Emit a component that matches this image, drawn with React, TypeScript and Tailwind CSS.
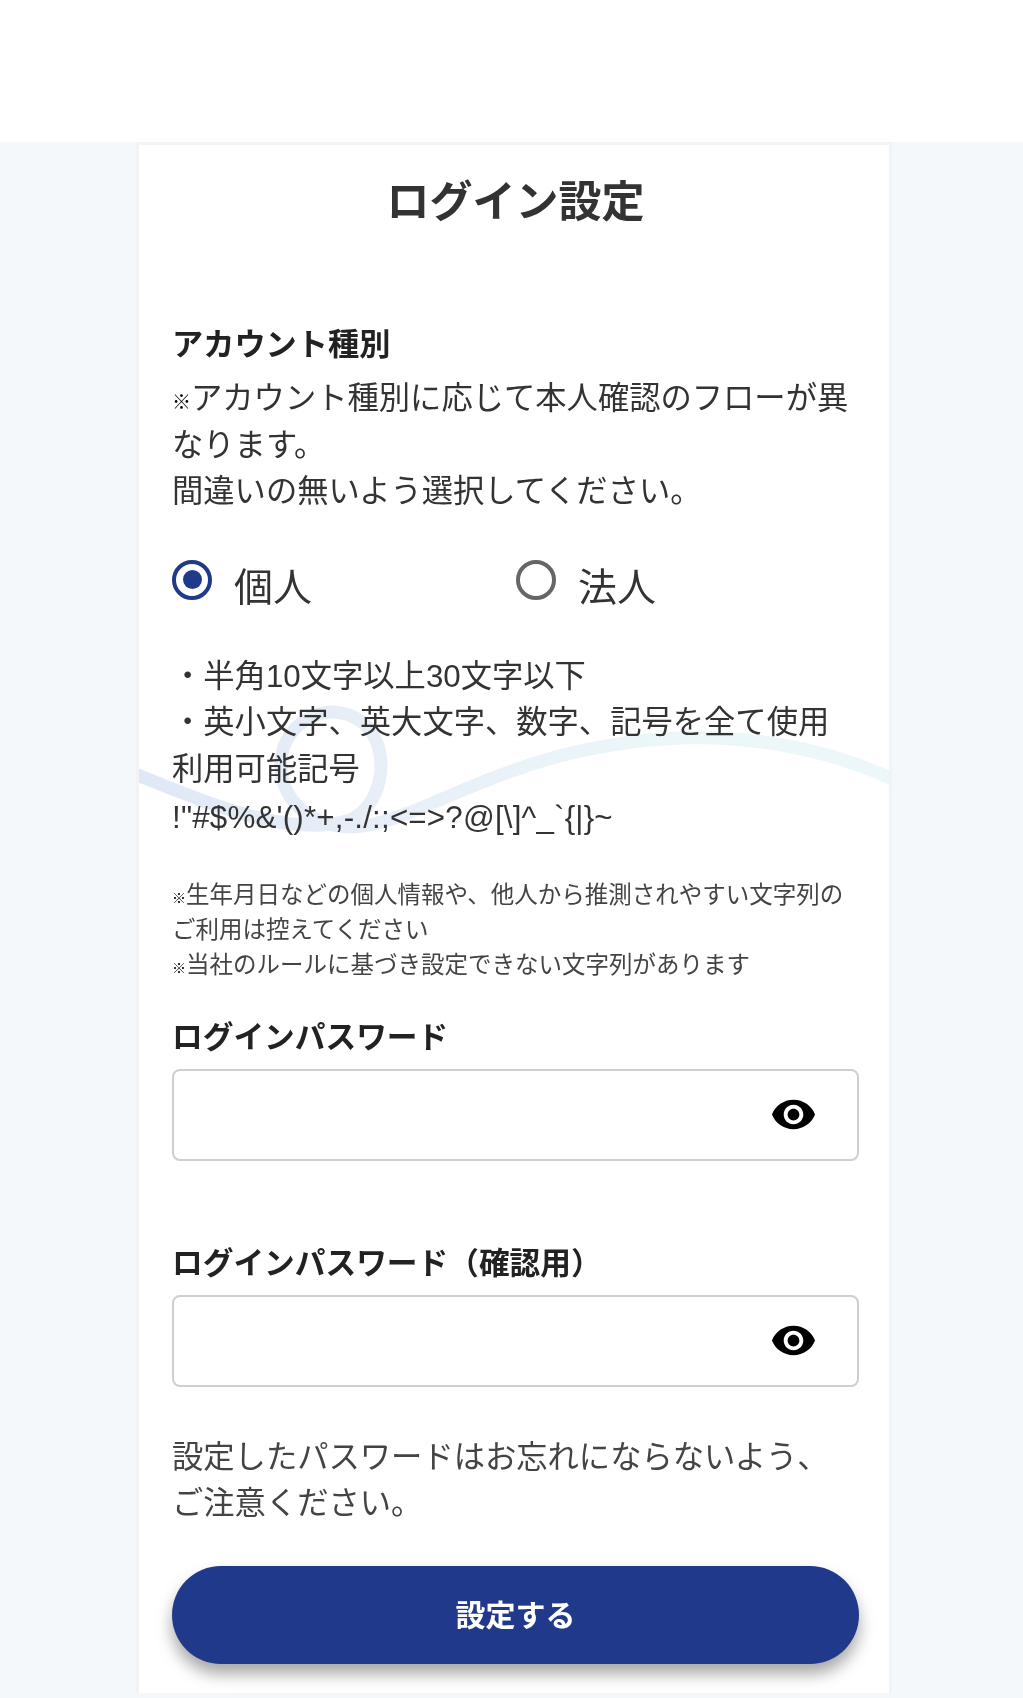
const EYE =
  "M12 4.5C7 4.5 2.73 7.61 1 12c1.73 4.39 6 7.5 11 7.5s9.27-3.11 11-7.5c-1.73-4.39-6-7.5-11-7.5zM12 17c-2.76 0-5-2.24-5-5s2.24-5 5-5 5 2.24 5 5-2.24 5-5 5zm0-8c-1.66 0-3 1.34-3 3s1.34 3 3 3 3-1.34 3-3-1.34-3-3-3z";

function PasswordField() {
  return (
    <div className="flex h-[92px] w-[687px] items-center justify-end rounded-[8px] border-2 border-[#cfcfcf] bg-white pr-[40px]">
      <svg viewBox="0 0 24 24" className="h-[47px] w-[47px]" fill="#000">
        <path d={EYE} />
      </svg>
    </div>
  );
}

function Radio({ checked, label }: { checked?: boolean; label: string }) {
  return (
    <div className="flex items-start gap-[22px]">
      <div
        className={
          checked
            ? "mt-[1px] flex h-[40px] w-[40px] items-center justify-center rounded-full border-[4px] border-[#20398a] bg-white"
            : "mt-[1px] flex h-[40px] w-[40px] items-center justify-center rounded-full border-[4px] border-[#666666] bg-white"
        }
      >
        {checked ? <div className="h-[19px] w-[19px] rounded-full bg-[#20398a]" /> : null}
      </div>
      <span className="pt-[1px] text-[39px] leading-[56px] text-[#333333]">{label}</span>
    </div>
  );
}

export default function App() {
  return (
    <div className="min-h-[1698px] bg-white font-['Liberation_Sans','Noto_Sans_CJK_JP',sans-serif] blur-[0.4px]">
      <div className="h-[142px] bg-white" />
      <div className="flex h-[1556px] justify-center bg-[#f4f8fb] pl-[5px]">
        <main className="relative h-[1551px] w-[756px] overflow-hidden border-[3px] border-b-0 border-[#f2f3f4] bg-white pl-[33px] pr-[30px] pt-[27px]">
          <svg
            viewBox="139 145 750 1548"
            className="pointer-events-none absolute inset-0 h-full w-full"
            fill="none"
          >
            <defs>
              <linearGradient id="wave" x1="136" x2="888" y1="0" y2="0" gradientUnits="userSpaceOnUse">
                <stop offset="0" stopColor="#dfe8f5" />
                <stop offset="0.35" stopColor="#e8eff8" />
                <stop offset="0.7" stopColor="#ecf7f9" />
                <stop offset="1" stopColor="#ebf7f8" />
              </linearGradient>
            </defs>
            <path
              d="M130 772 C200 800 290 840 350 820 C385 805 392 745 362 722 C330 698 285 720 281 760 C278 805 320 835 370 825 C440 810 520 745 680 738 C770 735 840 755 895 780"
              stroke="url(#wave)"
              strokeWidth="13"
            />
          </svg>
          <div className="relative">
            <h1 className="text-center text-[43px] font-bold leading-[60px] text-[#333333]">ログイン設定</h1>

            <h2 className="mt-[90px] text-[31.2px] font-bold leading-[46px] text-[#222222]">アカウント種別</h2>
            <p className="mt-[8px] text-[31.3px] leading-[46.5px] text-[#333333]">
              <span className="text-[19px] font-bold leading-none text-black">※</span>アカウント種別に応じて本人確認のフローが異なります。
              <br />
              間違いの無いよう選択してください。
            </p>

            <div className="mt-[43px] grid grid-cols-[344px_1fr]">
              <Radio checked label="個人" />
              <Radio label="法人" />
            </div>

            <div className="mt-[38px] text-[31.3px] leading-[46.5px] text-[#333333]">
              <p>・半角10文字以上30文字以下</p>
              <p>・英小文字、英大文字、数字、記号を全て使用</p>
              <p>利用可能記号</p>
              <p className="mt-[2px] tracking-[0.2px]">{"!\"#$%&'()*+,-./:;<=>?@[\\]^_`{|}~"}</p>
            </div>

            <div className="mt-[36px] text-[23.5px] leading-[35px] text-[#444444]">
              <p>
                <span className="text-[14px] font-bold leading-none text-black">※</span>生年月日などの個人情報や、他人から推測されやすい文字列の
              </p>
              <p>ご利用は控えてください</p>
              <p>
                <span className="text-[14px] font-bold leading-none text-black">※</span>当社のルールに基づき設定できない文字列があります
              </p>
            </div>

            <h2 className="mt-[32px] text-[30.7px] font-bold leading-[46px] text-[#222222]">ログインパスワード</h2>
            <div className="mt-[8px]">
              <PasswordField />
            </div>

            <h2 className="mt-[80px] text-[30.7px] font-bold leading-[46px] text-[#222222]">ログインパスワード（確認用）</h2>
            <div className="mt-[8px]">
              <PasswordField />
            </div>

            <p className="mt-[48px] text-[31.3px] leading-[46.5px] text-[#444444]">
              設定したパスワードはお忘れにならないよう、
              <br />
              ご注意ください。
            </p>

            <button className="mt-[38px] flex h-[98px] w-[687px] items-center justify-center rounded-full bg-[#20398a] pt-[2px] text-[30px] font-bold text-white shadow-[0_10px_16px_rgba(0,0,0,0.35)]">
              設定する
            </button>
          </div>
        </main>
      </div>
    </div>
  );
}
